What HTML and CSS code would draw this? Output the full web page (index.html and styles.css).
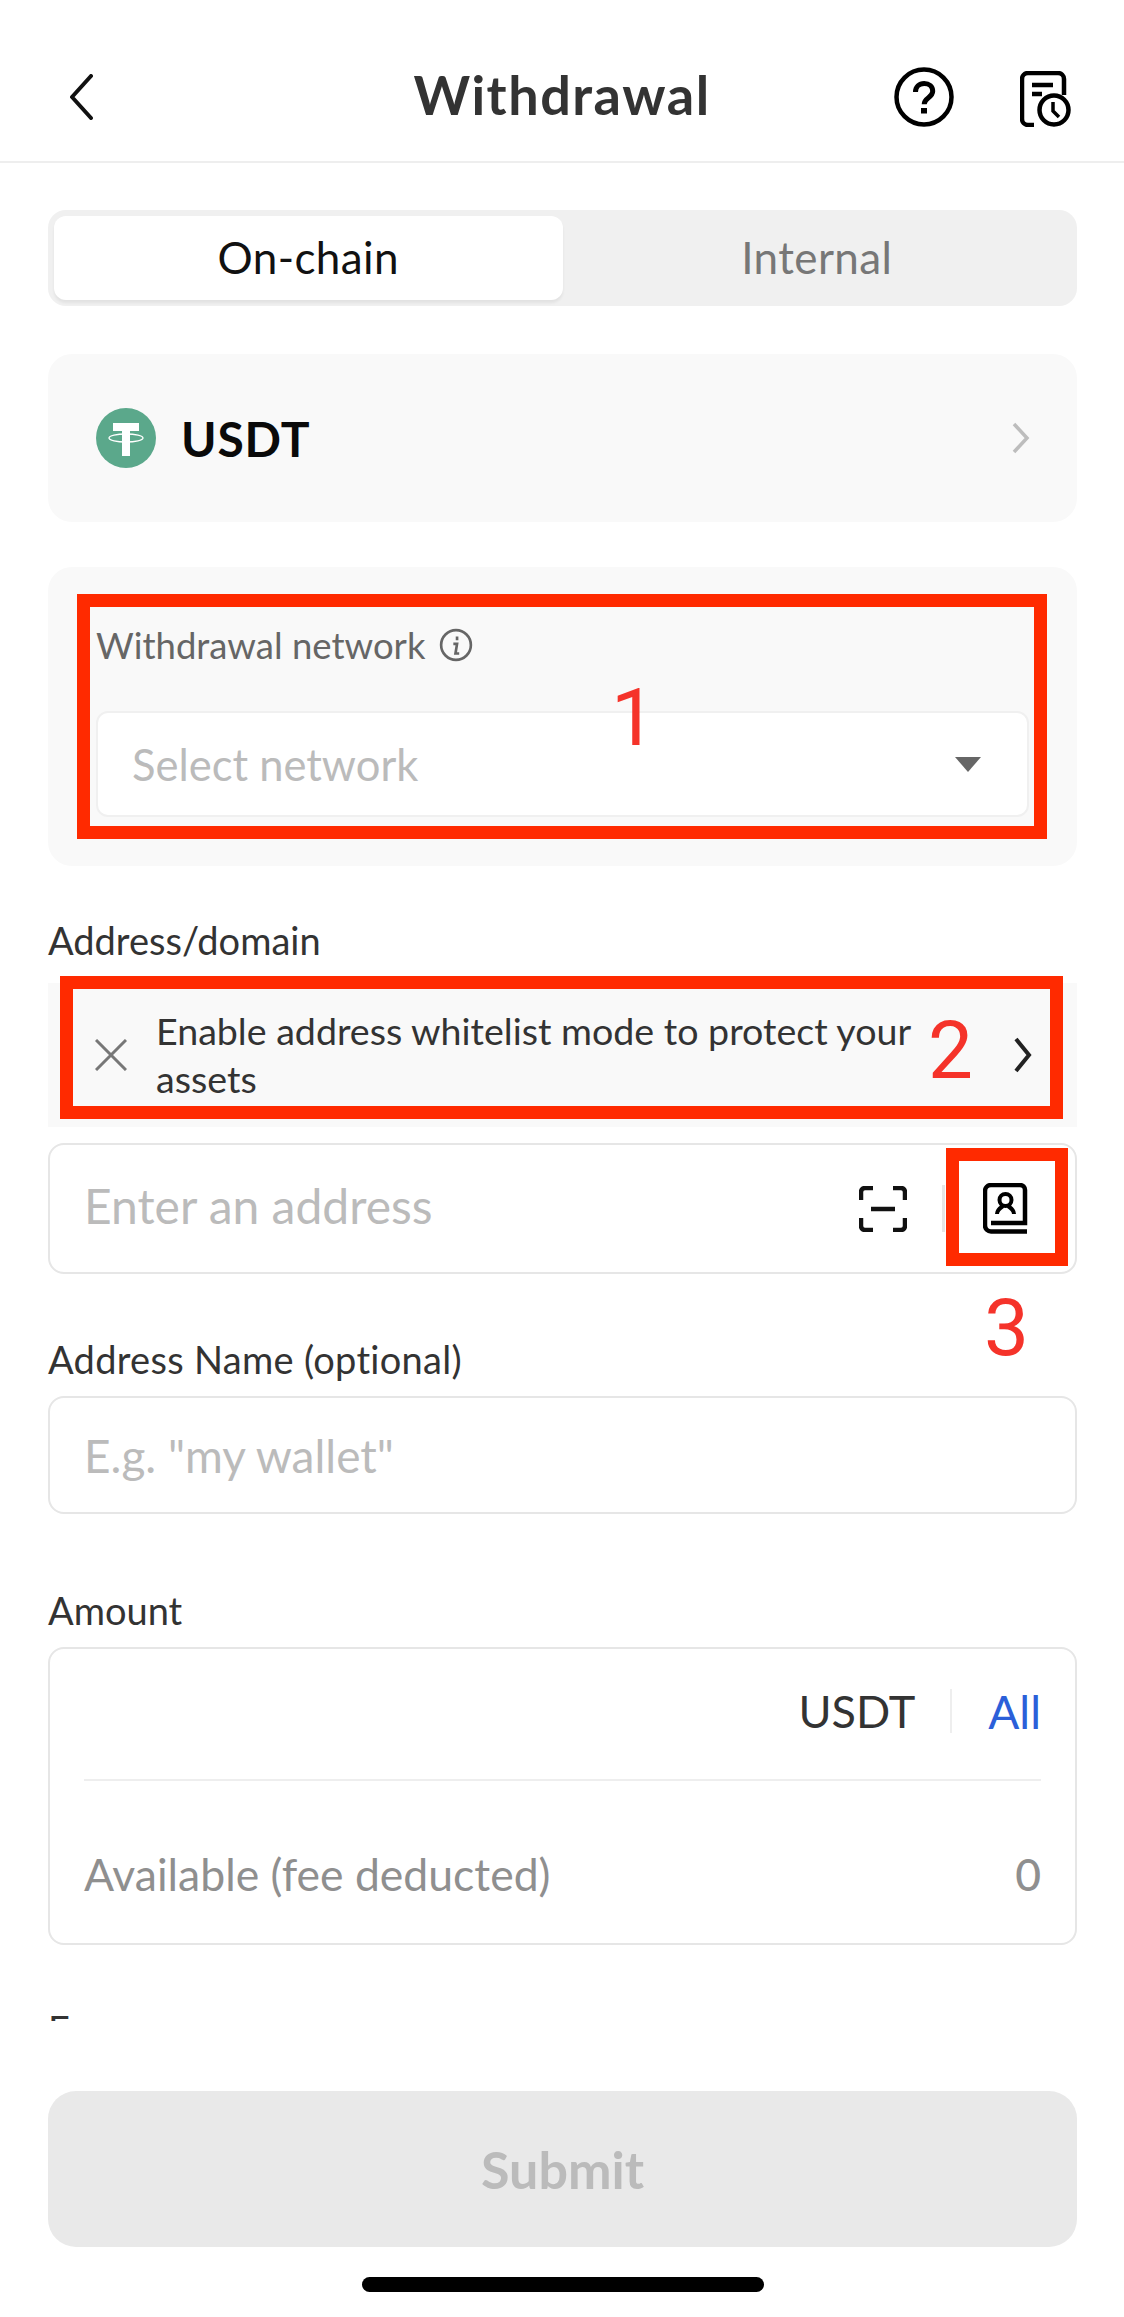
FILE: index.html
```html
<!DOCTYPE html>
<html lang="en">
<head>
<meta charset="utf-8">
<title>Withdrawal</title>
<link rel="stylesheet" href="styles.css">
</head>
<body>
<div class="page">
  <header class="topbar">
    <svg class="back" viewBox="0 0 24 46" fill="none"><path d="M22 2 3 23l19 21" stroke="#111" stroke-width="4" stroke-linecap="round" stroke-linejoin="round"/></svg>
    <h1 class="title">Withdrawal</h1>
    <div class="top-actions">
      <svg class="help" viewBox="0 0 60 60" fill="none"><circle cx="30" cy="30" r="27.5" stroke="#000" stroke-width="4.5"/><path d="M21.5 25c0-5 3.700-8.500 8.700-8.500s8.500 3.300 8.500 7.700c0 6.500-8.500 6.500-8.500 13" stroke="#000" stroke-width="5"/><rect x="27" y="41" width="6" height="5.500" fill="#000"/></svg>
      <svg class="history" viewBox="0 0 52 56" fill="none"><path d="M14 54H8a6 6 0 0 1-6-6V8a6 6 0 0 1 6-6h30a6 6 0 0 1 6 6v16" stroke="#000" stroke-width="4.500"/><path d="M12 14h21M12 23h10" stroke="#000" stroke-width="4.500"/><circle cx="34" cy="39" r="14.500" fill="#fff" stroke="#000" stroke-width="4.500"/><path d="M33 31v9l6 6" stroke="#000" stroke-width="3.500"/></svg>
    </div>
  </header>

  <main class="form">
    <div class="tabs">
      <div class="tab tab-active">On-chain</div>
      <div class="tab">Internal</div>
    </div>

    <div class="coin-card">
      <svg class="coin-icon" viewBox="0 0 60 60"><circle cx="30" cy="30" r="30" fill="#5ba88b"/><path d="M17 15h26v8H34v25h-8V23h-9z" fill="#fff"/><ellipse cx="30" cy="30" rx="17" ry="4" fill="none" stroke="#fff" stroke-width="1.300"/></svg>
      <span class="coin-name">USDT</span>
      <svg class="chevron-muted" viewBox="0 0 18 32" fill="none"><path d="M2 2l13 14L2 30" stroke="#bdbdbd" stroke-width="3.500"/></svg>
    </div>

    <section class="network-card">
      <div class="network-label">
        <span>Withdrawal network</span>
        <svg class="info" viewBox="0 0 32 32" fill="none"><circle cx="16" cy="16" r="14" stroke="#666" stroke-width="2.500"/><path d="M17 8v3.500M13.500 15h3.500l-1.500 9h3.500" stroke="#666" stroke-width="2.500"/></svg>
      </div>
      <div class="select">
        <span class="select-text">Select network</span>
        <span class="caret"></span>
      </div>
    </section>

    <div class="label label-address">Address/domain</div>
    <div class="notice">
      <svg class="notice-close" viewBox="0 0 32 32" fill="none"><path d="M1 1l30 30M31 1L1 31" stroke="#777" stroke-width="3"/></svg>
      <p class="notice-text">Enable address whitelist mode to protect your assets</p>
      <svg class="notice-chevron" viewBox="0 0 18 36" fill="none"><path d="M2 2l13 16L2 34" stroke="#222" stroke-width="4"/></svg>
    </div>
    <div class="field field-address">
      <span class="placeholder placeholder-address">Enter an address</span>
      <svg class="scan" viewBox="0 0 48 46" fill="none"><path d="M2 14V6a4 4 0 0 1 4-4h8M34 2h8a4 4 0 0 1 4 4v8M2 32v8a4 4 0 0 0 4 4h8M34 44h8a4 4 0 0 0 4-4v-8" stroke="#111" stroke-width="4.500"/><path d="M12 23h24" stroke="#111" stroke-width="4.500"/></svg>
      <span class="field-divider"></span>
      <svg class="book" viewBox="0 0 45 51" fill="none"><path d="M44 48.500H8a6 6 0 0 1-6-6V8a6 6 0 0 1 6-6h29a5 5 0 0 1 5 5v33H8" stroke="#000" stroke-width="4.500"/><circle cx="22.500" cy="17" r="6" stroke="#000" stroke-width="4"/><path d="M14 31c0-4 3-6 6-8M31 31c0-4-3-6-6-8" stroke="#000" stroke-width="4"/></svg>
    </div>

    <div class="label label-name">Address Name (optional)</div>
    <div class="field field-name"><span class="placeholder">E.g. "my wallet"</span></div>

    <div class="label label-amount">Amount</div>
    <div class="amount-box">
      <div class="amount-top">
        <span class="unit">USDT</span>
        <span class="amount-divider"></span>
        <span class="all">All</span>
      </div>
      <div class="amount-bottom">
        <span>Available (fee deducted)</span>
        <span class="amount-zero">0</span>
      </div>
    </div>

    <div class="label label-fee">Fee</div>
  </main>

  <footer class="footer">
    <button class="submit" type="button">Submit</button>
    <div class="home-bar"></div>
  </footer>

  <div class="mark mark-1"></div>
  <div class="mark mark-2"></div>
  <div class="mark mark-3"></div>
  <span class="digit digit-1">1</span>
  <span class="digit digit-2">2</span>
  <span class="digit digit-3">3</span>
</div>
</body>
</html>
```
FILE: styles.css
```css
* { box-sizing: border-box; }
html, body { margin: 0; padding: 0; background: #fff; }
body { font-family: Lato, "Liberation Sans", sans-serif; color: #333; }
.page { position: relative; width: 1124px; height: 2317px; overflow: hidden; display: flex; flex-direction: column; background: #fff; }

.topbar { height: 163px; flex: none; display: flex; align-items: center; justify-content: center; position: relative; border-bottom: 2px solid #eee; padding-top: 29px; }
.title { margin: 0; font-size: 54px; letter-spacing: 1.5px; font-weight: 700; color: #333; line-height: 64px; }
.back { position: absolute; left: 69px; top: 74px; width: 24px; height: 46px; }
.top-actions { position: absolute; left: 894px; top: 67px; display: flex; gap: 66px; align-items: flex-end; }
.help { width: 60px; height: 60px; display: block; }
.history { width: 52px; height: 56px; display: block; }

.form { height: 1858px; flex: none; overflow: hidden; padding: 47px 47px 0 48px; }

.tabs { height: 96px; background: #f0f0f0; border-radius: 18px; padding: 6px; display: flex; }
.tab { flex: 1; display: flex; align-items: center; justify-content: center; font-size: 44px; letter-spacing: .4px; color: #777; border-radius: 12px; padding-bottom: 2px; }
.tab-active { background: #fff; color: #111; box-shadow: 0 3px 3px rgba(0,0,0,.06); }

.coin-card { margin-top: 48px; height: 168px; background: #f9f9f9; border-radius: 24px; display: flex; align-items: center; padding: 0 47px 0 48px; }
.coin-icon { width: 60px; height: 60px; flex: none; }
.coin-name { margin-left: 25px; font-size: 48px; letter-spacing: .8px; font-weight: 700; color: #0a0a0a; flex: 1; }
.chevron-muted { width: 18px; height: 32px; }

.network-card { margin-top: 45px; height: 299px; background: #f9f9f9; border-radius: 24px; padding: 54px 48px 0; }
.network-label { display: flex; align-items: center; gap: 14px; font-size: 36.5px; line-height: 48px; color: #666; }
.info { width: 34px; height: 34px; }
.select { margin-top: 42px; height: 106px; background: #fff; border: 2px solid #f0f0f0; border-radius: 12px; display: flex; align-items: center; justify-content: space-between; padding: 0 46px 0 34px; }
.select-text { font-size: 43.5px; color: #bbb; }
.caret { width: 0; height: 0; border-left: 13px solid transparent; border-right: 13px solid transparent; border-top: 15px solid #666; }

.label { font-size: 38px; line-height: 48px; color: #333; }
.label-address { margin-top: 50px; }
.label-name { margin-top: 61px; letter-spacing: .3px; }
.label-amount { margin-top: 72px; }
.label-fee { margin-top: 60px; }

.notice { margin-top: 19px; height: 144px; background: #f9f9f9; display: flex; align-items: center; padding: 0 45px 0 47px; }
.notice-close { width: 32px; height: 32px; flex: none; }
.notice-text { margin: 0 0 0 29px; flex: 1; padding-right: 60px; font-size: 37.6px; line-height: 48px; color: #333; }
.notice-chevron { width: 18px; height: 36px; flex: none; }

.field { border: 2px solid #e6e6e6; border-radius: 16px; display: flex; align-items: center; padding: 0 0 0 34px; }
.placeholder { font-size: 46px; color: #bbb; flex: 1; }
.placeholder-address { font-size: 48px; padding-bottom: 6px; }
.field-address { margin-top: 16px; height: 131px; }
.field-name { margin-top: 13px; height: 118px; }
.scan { width: 48px; height: 46px; flex: none; }
.field-divider { width: 3px; height: 47px; margin: 0 38px 0 35px; background: #e6e6e6; flex: none; }
.book { width: 45px; height: 51px; flex: none; margin-right: 47px; }

.amount-box { margin-top: 13px; height: 298px; border: 2px solid #e6e6e6; border-radius: 16px; padding: 0 34px 0 34px; display: flex; flex-direction: column; }
.amount-top { height: 132px; flex: none; border-bottom: 2px solid #eee; display: flex; align-items: center; justify-content: flex-end; font-size: 46px; padding-bottom: 6px; }
.unit { color: #333; font-size: 45px; }
.amount-divider { width: 2px; height: 44px; margin: 0 36px 0 35px; background: #eee; }
.all { color: #2b5fd9; }
.amount-bottom { flex: 1; display: flex; align-items: center; justify-content: space-between; font-size: 44.5px; color: #8f8f8f; padding-top: 22px; }
.amount-zero { font-weight: 500; }

.footer { flex: none; padding: 70px 47px 0 48px; display: flex; flex-direction: column; align-items: center; }
.submit { width: 100%; height: 156px; border: 0; background: #e9e9e9; border-radius: 28px; font-family: inherit; font-size: 52px; font-weight: 700; color: #bbb; padding: 0; }
.home-bar { margin-top: 30px; width: 402px; height: 15px; border-radius: 8px; background: #000; }

.mark { position: absolute; border: 13px solid #ff2a00; }
.mark-1 { left: 77px; top: 594px; width: 970px; height: 245px; }
.mark-2 { left: 60px; top: 976px; width: 1003px; height: 143px; }
.mark-3 { left: 946px; top: 1148px; width: 122px; height: 118px; }

.digit { position: absolute; font-family: Roboto, "Liberation Sans", sans-serif; font-size: 80px; line-height: 80px; color: #f5332a; }
.digit-1 { left: 611px; top: 678px; }
.digit-2 { left: 928px; top: 1011px; }
.digit-3 { left: 984px; top: 1288px; }
```
